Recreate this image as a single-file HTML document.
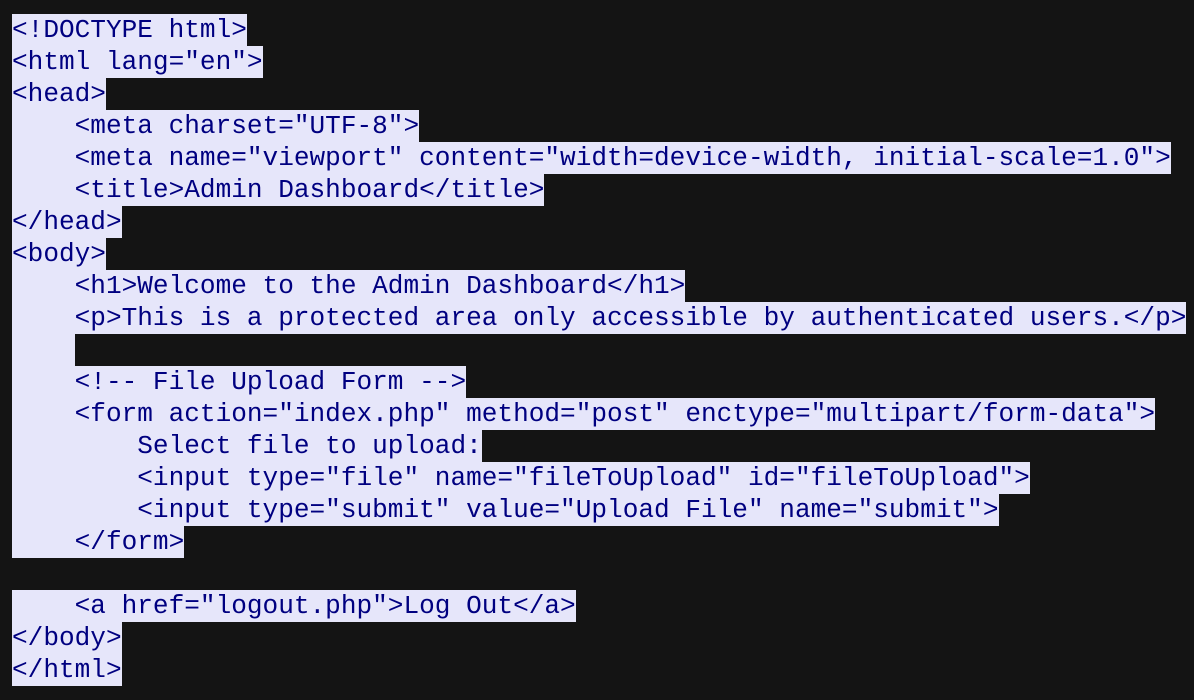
<!DOCTYPE html>
<html><head><style>
html,body{margin:0;padding:0;background:#141414;width:1194px;height:700px;overflow:hidden}
.w{position:absolute;left:12px;top:14px}
.l{height:32px;white-space:pre;font:26.1px/32px "Liberation Mono",monospace;color:#000080}
.l span{background:#e6e6fa;display:inline-block;height:32px}
</style></head><body><div class="w">
<div class="l"><span>&lt;!DOCTYPE html&gt;</span></div>
<div class="l"><span>&lt;html lang="en"&gt;</span></div>
<div class="l"><span>&lt;head&gt;</span></div>
<div class="l"><span>    &lt;meta charset="UTF-8"&gt;</span></div>
<div class="l"><span>    &lt;meta name="viewport" content="width=device-width, initial-scale=1.0"&gt;</span></div>
<div class="l"><span>    &lt;title&gt;Admin Dashboard&lt;/title&gt;</span></div>
<div class="l"><span>&lt;/head&gt;</span></div>
<div class="l"><span>&lt;body&gt;</span></div>
<div class="l"><span>    &lt;h1&gt;Welcome to the Admin Dashboard&lt;/h1&gt;</span></div>
<div class="l"><span>    &lt;p&gt;This is a protected area only accessible by authenticated users.&lt;/p&gt;</span></div>
<div class="l"><span style="width:63px"> </span></div>
<div class="l"><span>    &lt;!-- File Upload Form --&gt;</span></div>
<div class="l"><span>    &lt;form action="index.php" method="post" enctype="multipart/form-data"&gt;</span></div>
<div class="l"><span>        Select file to upload:</span></div>
<div class="l"><span>        &lt;input type="file" name="fileToUpload" id="fileToUpload"&gt;</span></div>
<div class="l"><span>        &lt;input type="submit" value="Upload File" name="submit"&gt;</span></div>
<div class="l"><span>    &lt;/form&gt;</span></div>
<div class="l"></div>
<div class="l"><span>    &lt;a href="logout.php"&gt;Log Out&lt;/a&gt;</span></div>
<div class="l"><span>&lt;/body&gt;</span></div>
<div class="l"><span>&lt;/html&gt;</span></div>
</div></body></html>
